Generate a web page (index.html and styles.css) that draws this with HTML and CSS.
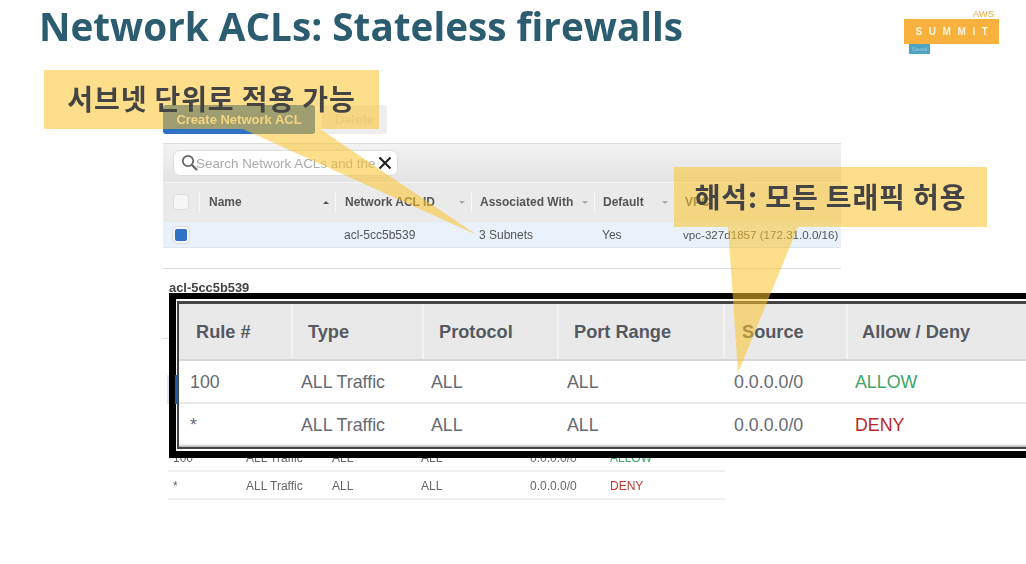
FILE: index.html
```html
<!DOCTYPE html>
<html>
<head>
  <title>Network ACLs</title>
  <link rel="stylesheet" href="styles.css">
</head>
<body>
  <div class="slide">
    <div class="slide-head">
      <h1>Network ACLs: Stateless firewalls</h1>
      <div class="logo">
        <div class="logo-aws">AWS</div>
        <div class="logo-box">SUMMIT</div>
        <div class="logo-city">Seoul</div>
      </div>
    </div>

    <div class="console">
      <div class="buttons">
        <button class="btn-create">Create Network ACL</button>
        <button class="btn-delete">Delete</button>
      </div>
      <div class="search-bar">
        <div class="search-box">
          <svg class="icon-search" width="18" height="18" viewBox="0 0 18 18"><circle cx="7" cy="7" r="5.2" fill="none" stroke="#666" stroke-width="1.8"/><path d="M11 11l5 5" stroke="#666" stroke-width="2.4"/></svg>
          <span class="search-text">Search Network ACLs and the</span>
          <svg class="icon-clear" width="14" height="14" viewBox="0 0 14 14"><path d="M1.5 1.5l11 11M12.500 1.500l-11 11" stroke="#222" stroke-width="2.200"/></svg>
        </div>
      </div>
      <div class="list-row list-head">
        <div class="col-check"><span class="check"></span></div>
        <div class="col-name">Name<span class="sort sort-up"></span></div>
        <div class="col-id">Network ACL ID<span class="sort"></span></div>
        <div class="col-assoc">Associated With<span class="sort"></span></div>
        <div class="col-default">Default<span class="sort"></span></div>
        <div class="col-vpc">VPC</div>
      </div>
      <div class="list-row list-selected">
        <div class="col-check"><span class="check check-on"></span></div>
        <div class="col-name"></div>
        <div class="col-id">acl-5cc5b539</div>
        <div class="col-assoc">3 Subnets</div>
        <div class="col-default">Yes</div>
        <div class="col-vpc">vpc-327d1857 (172.31.0.0/16)</div>
      </div>
      <div class="divider"></div>
      <div class="acl-name">acl-5cc5b539</div>
      <div class="small-rules">
        <div class="small-row">
          <span class="s-rule">100</span><span class="s-type">ALL Traffic</span><span class="s-proto">ALL</span><span class="s-port">ALL</span><span class="s-src">0.0.0.0/0</span><span class="s-allow">ALLOW</span>
        </div>
        <div class="small-row">
          <span class="s-rule">*</span><span class="s-type">ALL Traffic</span><span class="s-proto">ALL</span><span class="s-port">ALL</span><span class="s-src">0.0.0.0/0</span><span class="s-deny">DENY</span>
        </div>
      </div>
    </div>

    <!-- bits of the page under the zoomed table that still show round it -->
    <div class="peek-line"></div>
    <div class="peek-edge"></div>

    <!-- zoomed copy of the rules table, over the small one -->
    <div class="zoom-frame">
      <div class="zoom-inner">
        <div class="z-row z-head">
          <div class="z-rule">Rule #</div>
          <div class="z-type">Type</div>
          <div class="z-proto">Protocol</div>
          <div class="z-port">Port Range</div>
          <div class="z-src">Source</div>
          <div class="z-action">Allow / Deny</div>
        </div>
        <div class="z-row">
          <div class="z-rule">100</div>
          <div class="z-type">ALL Traffic</div>
          <div class="z-proto">ALL</div>
          <div class="z-port">ALL</div>
          <div class="z-src">0.0.0.0/0</div>
          <div class="z-action allow">ALLOW</div>
        </div>
        <div class="z-row">
          <div class="z-rule">*</div>
          <div class="z-type">ALL Traffic</div>
          <div class="z-proto">ALL</div>
          <div class="z-port">ALL</div>
          <div class="z-src">0.0.0.0/0</div>
          <div class="z-action deny">DENY</div>
        </div>
      </div>
    </div>
    <div class="peek-blue"></div>

    <div class="callout callout-subnet">서브넷 단위로 적용 가능</div>
    <div class="callout callout-traffic">해석: 모든 트래픽 허용</div>
    <svg class="tails" width="1026" height="564" viewBox="0 0 1026 564">
      <polygon points="243,129 320,129 477,235"/>
      <polygon points="728,227 798,227 738,373"/>
    </svg>
  </div>
</body>
</html>
```
FILE: styles.css
```css
html, body {
  margin: 0;
  padding: 0;
  background-color: white;
}
.slide {
  position: relative;
  width: 1026px;
  height: 564px;
  overflow: hidden;
  font-family: "Liberation Sans", Arial, sans-serif;
  filter: blur(0.5px);
}
.slide-head {
  display: flex;
  justify-content: space-between;
  height: 105px;
  padding: 0 27px 0 39px;
  box-sizing: border-box;
}
h1 {
  margin: 0;
  font-family: "Open Sans", sans-serif;
  font-size: 38.7px;
  line-height: 53px;
  font-weight: 700;
  color: #2b5c70;
}
.logo {
  width: 95px;
  padding-top: 8px;
  font-family: "Liberation Sans", sans-serif;
}
.logo-aws {
  height: 11px;
  padding-right: 5px;
  text-align: right;
  font-size: 9.5px;
  line-height: 11px;
  color: #f0a93a;
}
.logo-box {
  height: 25px;
  padding-left: 7px;
  box-sizing: border-box;
  background-color: #f8b13c;
  color: #fff6e0;
  text-align: center;
  font-size: 10px;
  font-weight: 700;
  line-height: 25px;
  letter-spacing: 6.6px;
}
.logo-city {
  width: 21px;
  height: 10px;
  margin-left: 5px;
  background-color: #4fa3c4;
  color: #9accdd;
  font-size: 6px;
  line-height: 10px;
  text-align: center;
}

.console {
  margin-left: 163px;
  width: 678px;
}
.buttons {
  display: flex;
  gap: 7px;
  height: 38px;
}
.buttons button {
  height: 29px;
  border: none;
  border-radius: 3px;
  font-family: inherit;
  font-size: 13px;
  font-weight: 700;
  padding: 0;
}
.btn-create {
  width: 152px;
  background-color: #2f72c4;
  color: #e8e8e8;
}
.btn-delete {
  width: 65px;
  background-color: #eeeeee;
  color: #d8d8d8;
}
.search-bar {
  height: 39px;
  display: flex;
  align-items: center;
  padding-left: 10px;
  background: linear-gradient(#f2f2f2, #e4e4e4);
  border-top: 1px solid #dddddd;
  box-sizing: border-box;
}
.search-box {
  display: flex;
  align-items: center;
  width: 225px;
  height: 26px;
  box-sizing: border-box;
  padding-left: 7px;
  background-color: white;
  border: 1px solid #dddddd;
  border-radius: 7px;
}
.icon-search {
  flex: none;
  margin-right: -3px;
}
.search-text {
  flex: none;
  width: 179px;
  white-space: nowrap;
  font-size: 13.4px;
  color: #aaaaaa;
}
.icon-clear {
  flex: none;
  margin-left: 3px;
}
.list-row {
  display: flex;
  align-items: center;
  font-size: 12px;
  color: #555555;
}
.list-head {
  height: 40px;
  padding-bottom: 1px;
  background-color: #eaeaea;
  font-weight: 700;
  border-top: 1px solid #f6f6f6;
  box-sizing: border-box;
}
.list-head > div {
  height: 20px;
  line-height: 20px;
  border-left: 1px solid #f8f8f8;
  position: relative;
  box-sizing: border-box;
}
.list-head .col-check {
  border-left: none;
}
.list-selected {
  height: 26px;
  background-color: #e9f1fb;
  border-bottom: 1px solid #dde5ee;
  box-sizing: border-box;
}
.col-check {
  width: 36px;
  padding-left: 10px;
  box-sizing: border-box;
  display: flex;
  align-items: center;
}
.col-name {
  width: 136px;
  padding-left: 9px;
  box-sizing: border-box;
}
.col-id {
  width: 136px;
  padding-left: 9px;
  box-sizing: border-box;
}
.col-assoc {
  width: 123px;
  padding-left: 8px;
  box-sizing: border-box;
}
.col-default {
  width: 80px;
  padding-left: 8px;
  box-sizing: border-box;
}
.col-vpc {
  flex: 1;
  white-space: nowrap;
  padding-left: 10px;
  box-sizing: border-box;
}
.list-selected .col-vpc {
  padding-left: 9px;
  font-size: 11.6px;
}
.check {
  display: block;
  width: 16px;
  height: 16px;
  box-sizing: border-box;
  background-color: #f6f6f6;
  border: 1px solid #dcdcdc;
  border-radius: 4px;
}
.check-on {
  background-color: #2f72c4;
  border: 2px solid #f4f4f4;
  box-shadow: 0 0 0 1px #dcdcdc;
}
.sort {
  position: absolute;
  right: 6px;
  top: 9px;
  border-left: 3px solid transparent;
  border-right: 3px solid transparent;
  border-top: 3px solid #aaaaaa;
}
.sort-up {
  border-top: none;
  border-bottom: 3px solid #555555;
}
.divider {
  height: 1px;
  margin-top: 20px;
  background-color: #dddddd;
}
.acl-name {
  margin: 12px 0 0 6px;
  height: 163px;
  font-size: 12.9px;
  line-height: 14px;
  font-weight: 700;
  color: #444444;
}
.small-rules {
  width: 557px;
  margin-left: 5px;
}
.small-row {
  display: flex;
  height: 28px;
  line-height: 28px;
  font-size: 12px;
  color: #666666;
  border-bottom: 2px solid #eeeeee;
  box-sizing: border-box;
}
.s-rule { width: 78px; padding-left: 5px; box-sizing: border-box; }
.s-type { width: 86px; }
.s-proto { width: 89px; }
.s-port { width: 109px; }
.s-src { width: 80px; }
.s-allow { color: #4aa56a; }
.s-deny { color: #c0392b; }

.peek-line {
  position: absolute;
  left: 163px;
  top: 338px;
  width: 7px;
  height: 1px;
  background-color: #dddddd;
}
.peek-edge {
  position: absolute;
  left: 167px;
  top: 375px;
  width: 3px;
  height: 29px;
  background-color: #dfe6ef;
}
.peek-blue {
  position: absolute;
  left: 175px;
  top: 375px;
  width: 3px;
  height: 29px;
  background-color: #1f5aa8;
}
.zoom-frame {
  position: absolute;
  left: 169px;
  top: 293px;
  width: 900px;
  height: 165px;
  box-sizing: border-box;
  background-color: white;
  border: 6px solid black;
  border-left-width: 7px;
  border-bottom-width: 7px;
  padding: 2px 0 2px 1px;
}
.zoom-inner {
  height: 100%;
  box-sizing: border-box;
  background-color: white;
  border-style: solid;
  border-color: #444444;
  border-width: 3px 0 2px 2px;
  box-shadow: inset 0 -3px 3px -2px #999999;
}
.z-row {
  display: flex;
  height: 43px;
  font-size: 17.800px;
  line-height: 42px;
  color: #666a72;
  border-bottom: 2px solid #e8e8e8;
  box-sizing: border-box;
}
.z-row:last-child {
  border-bottom: none;
}
.z-head {
  height: 57px;
  font-size: 18.2px;
  line-height: 56px;
  font-weight: 700;
  color: #555962;
  background-color: #e9e9e9;
  border-bottom: 2px solid #d8d8d8;
}
.z-head > div {
  border-right: 2px solid #f4f4f4;
}
.z-row > div {
  box-sizing: border-box;
}
.z-rule { width: 114px; padding-left: 11px; }
.z-type { width: 131px; padding-left: 8px; }
.z-proto { width: 135px; padding-left: 7px; }
.z-port { width: 166px; padding-left: 8px; }
.z-src { width: 123px; padding-left: 9px; }
.z-action { flex: 1; padding-left: 7px; }
.z-head .z-rule { padding-left: 17px; }
.z-head .z-type { padding-left: 15px; }
.z-head .z-proto { padding-left: 15px; }
.z-head .z-port { padding-left: 15px; }
.z-head .z-src { padding-left: 17px; }
.z-head .z-action { padding-left: 14px; }
.allow { color: #3fa568; }
.deny { color: #b8282e; }

.callout {
  position: absolute;
  box-sizing: border-box;
  background-color: rgba(249, 195, 44, 0.55);
  font-family: "Noto Sans CJK KR", sans-serif;
  font-size: 28px;
  font-weight: 700;
  letter-spacing: 0.9px;
  color: #444444;
  white-space: nowrap;
  text-align: center;
}
.callout-subnet {
  left: 44px;
  top: 70px;
  width: 335px;
  height: 59px;
  line-height: 57px;
}
.callout-traffic {
  left: 674px;
  top: 167px;
  width: 313px;
  height: 60px;
  line-height: 58px;
}
.tails {
  position: absolute;
  left: 0;
  top: 0;
  pointer-events: none;
}
.tails polygon {
  fill: rgba(249, 195, 44, 0.55);
}
```
